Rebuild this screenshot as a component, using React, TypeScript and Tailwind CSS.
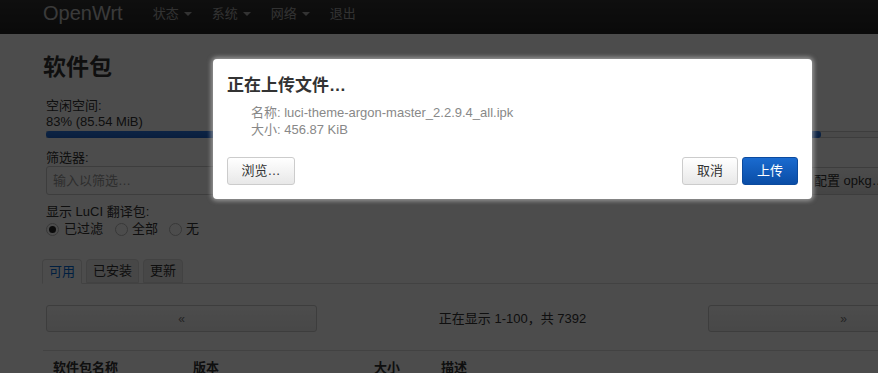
import React from "react";

const font = "font-['Liberation_Sans','Noto_Sans_CJK_SC',sans-serif]";

function Caret() {
  return (
    <span className="ml-[5px] inline-block w-0 h-0 border-l-[4px] border-r-[4px] border-t-[4px] border-l-transparent border-r-transparent border-t-[#aaa] align-middle" />
  );
}

function Radio({ checked }: { checked?: boolean }) {
  return (
    <span className="w-[13px] h-[13px] rounded-full border border-[#bbb] bg-white flex items-center justify-center">
      {checked && <span className="w-[7px] h-[7px] rounded-full bg-[#222]" />}
    </span>
  );
}

export default function App() {
  return (
    <div className={`relative w-[878px] h-[373px] overflow-hidden bg-white text-[13px] text-[#333] ${font}`}>
      {/* header */}
      <div className="h-[34px] bg-gradient-to-b from-[#333] to-[#222] flex items-start pl-[43px]">
        <div className="pt-[3px] text-[20px] leading-[20px] text-[#c4c4c4]">OpenWrt</div>
        <div className="flex ml-[20px] text-[13px] text-[#a8a8a8] leading-[28px]">
          <span className="px-[10px] flex items-center">状态<Caret /></span>
          <span className="px-[10px] flex items-center">系统<Caret /></span>
          <span className="px-[10px] flex items-center">网络<Caret /></span>
          <span className="px-[10px] flex items-center">退出</span>
        </div>
      </div>

      {/* main */}
      <div className="pl-[43px] w-[983px]">
        <h2 className="mt-[18px] text-[23px] leading-[30px] font-bold text-[#333]">软件包</h2>
        <div className="px-[3px]">
          <div className="mt-[16px] leading-[16px]">空闲空间:</div>
          <div className="leading-[16px]">83% (85.54 MiB)</div>
          <div className="mt-[1px] h-[7px] border-y border-[#ccc] bg-[#f5f5f5] relative">
            <div className="h-[7px] -mt-[1px] w-[83%] rounded-[3px] bg-gradient-to-b from-[#2b78e4] to-[#1f66d0]" />
          </div>

          <div className="mt-[12px] flex items-end">
            <div className="w-[757px]">
              <div className="leading-[16px]">筛选器:</div>
              <div className="w-[300px] h-[29px] border border-[#ccc] rounded-[3px] flex items-center px-[6px] text-[#999]">
                输入以筛选…
              </div>
            </div>
            <div className="h-[28px] border border-[#ccc] rounded-[3px] bg-gradient-to-b from-white to-[#e6e6e6] flex items-center px-[10px] whitespace-nowrap text-[13px]">
              配置 opkg…
            </div>
          </div>

          <div className="mt-[9px] leading-[16px]">显示 LuCI 翻译包:</div>
          <div className="mt-[1px] flex items-center leading-[16px] text-[13px]">
            <Radio checked />
            <span className="ml-[5px]">已过滤</span>
            <span className="ml-[12px]"><Radio /></span>
            <span className="ml-[4px]">全部</span>
            <span className="ml-[11px]"><Radio /></span>
            <span className="ml-[4px]">无</span>
          </div>
        </div>

        {/* tabs */}
        <div className="mt-[22px] flex items-end border-b border-[#ddd] h-[25px] text-[13px]">
          <div className="ml-[-1px] h-[25px] -mb-[1px] px-[6px] border border-[#ddd] border-b-white bg-white rounded-t-[4px] text-[#0069d6] flex items-center">可用</div>
          <div className="ml-[4px] h-[24px] px-[6px] border border-[#ddd] bg-[#eee] rounded-t-[4px] flex items-center">已安装</div>
          <div className="ml-[4px] h-[24px] px-[6px] border border-[#ddd] bg-[#eee] rounded-t-[4px] flex items-center">更新</div>
        </div>

        {/* pagination */}
        <div className="px-[3px] mt-[21px] grid grid-cols-[271px_391px_271px] items-center">
          <div className="h-[27px] border border-[#ccc] rounded-[3px] bg-gradient-to-b from-white to-[#f0f0f0] flex items-center justify-center text-[#777] text-[12px]">«</div>
          <div className="text-center text-[13px]">正在显示 1-100，共 7392</div>
          <div className="h-[27px] border border-[#ccc] rounded-[3px] bg-gradient-to-b from-white to-[#f0f0f0] flex items-center justify-center text-[#777] text-[12px]">»</div>
        </div>

        {/* table header */}
        <div className="mt-[18px] border-t border-[#ddd] grid grid-cols-[140px_181px_67px_1fr] pt-[8px] font-bold text-[13px] leading-[18px]">
          <div className="pl-[10px]">软件包名称</div>
          <div className="pl-[10px]">版本</div>
          <div className="pl-[10px]">大小</div>
          <div className="pl-[10px]">描述</div>
        </div>
      </div>

      {/* overlay */}
      <div className="absolute inset-0 bg-black/70" />

      {/* modal */}
      <div className="absolute left-[213px] top-[59px] w-[599px] h-[140px] bg-white rounded-[4px] shadow-[0_0_4px_2px_rgba(200,200,200,0.6)] px-[14px] pt-[14px]">
        <div className="text-[17px] leading-[25px] font-bold text-[#333]">正在上传文件…</div>
        <div className="mt-[6px] pl-[24px] text-[#888] leading-[17px] text-[13px]">
          <div>名称: luci-theme-argon-master_2.2.9.4_all.ipk</div>
          <div>大小: 456.87 KiB</div>
        </div>
        <div className="mt-[19px] flex items-center text-[13px]">
          <div className="w-[68px] h-[28px] border border-[#ccc] rounded-[3px] bg-gradient-to-b from-white to-[#e8e8e8] flex items-center justify-center text-[#333]">浏览…</div>
          <div className="ml-auto w-[56px] h-[28px] border border-[#ccc] rounded-[3px] bg-gradient-to-b from-white to-[#e8e8e8] flex items-center justify-center text-[#333]">取消</div>
          <div className="ml-[4px] w-[56px] h-[28px] border border-[#0b4a9e] rounded-[3px] bg-gradient-to-b from-[#1a6bd0] to-[#0a4da6] flex items-center justify-center text-white">上传</div>
        </div>
      </div>
    </div>
  );
}
